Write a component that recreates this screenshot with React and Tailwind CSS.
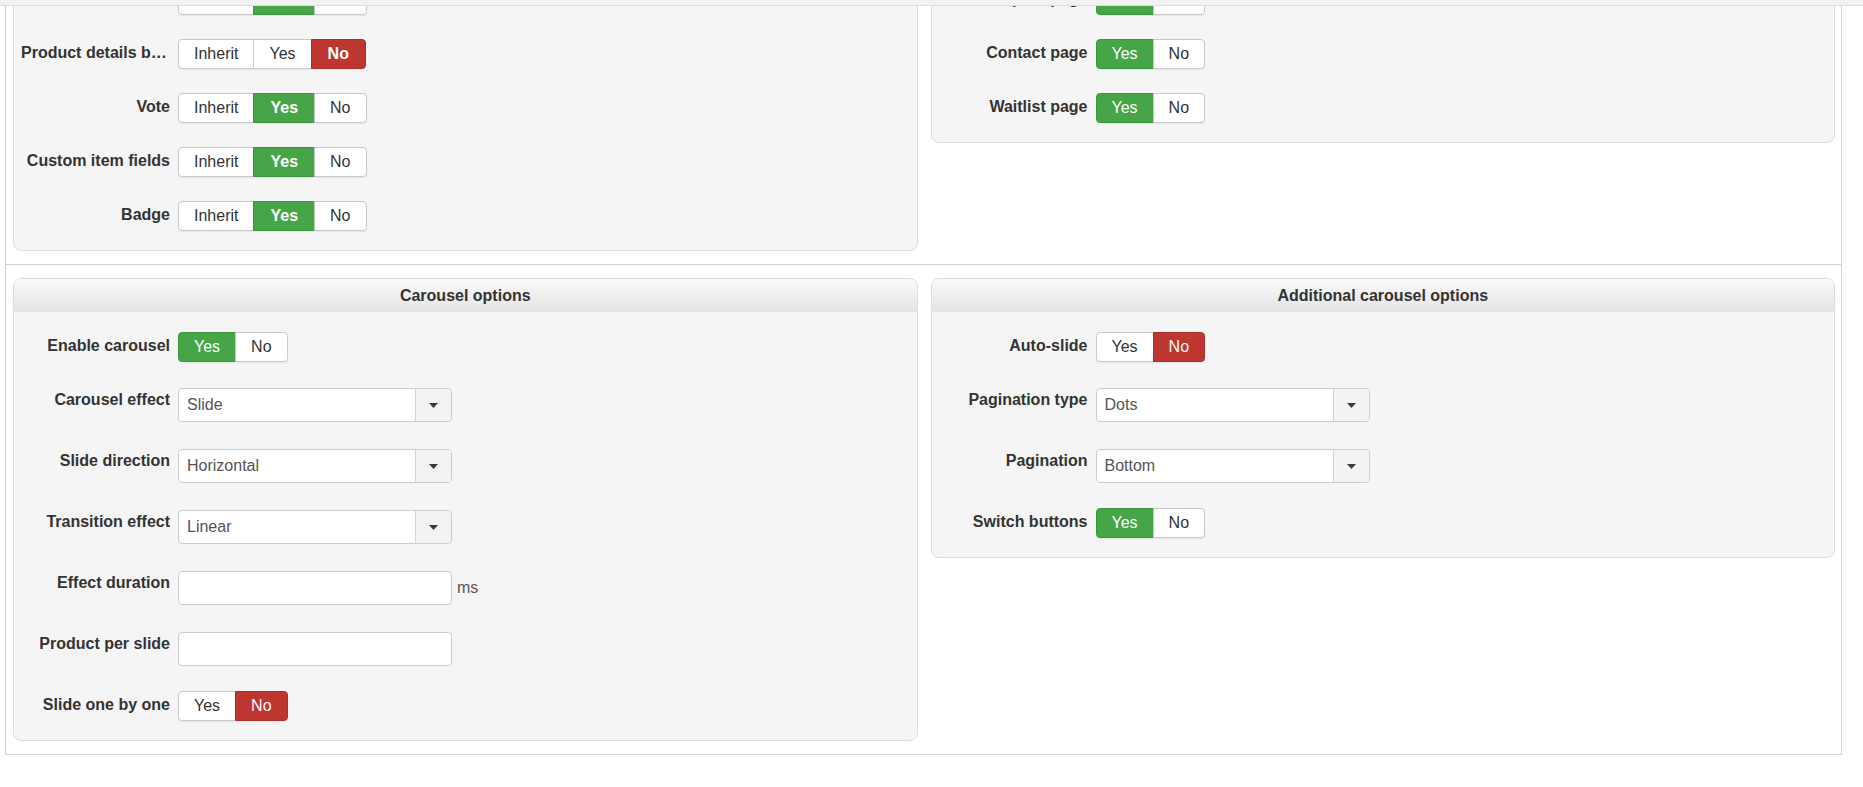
import React from "react";

const TONES = {
  Yes: "bg-[#46a546] border-[#3d963d] text-white",
  No: "bg-[#bd362f] border-[#a8302a] text-white",
};

// Joomla-style radio button group
const Toggle = ({ options = ["Yes", "No"], value, bold = false }) => (
  <div className="flex h-[30px] rounded-[4px] shadow-[0_1px_2px_rgba(0,0,0,0.07)]">
    {options.map((opt) => {
      const active = opt === value;
      return (
        <button
          key={opt}
          type="button"
          className={`-ml-px border py-[4px] text-[16px] leading-5 first:ml-0 first:rounded-l-[4px] last:rounded-r-[4px] ${
            active
              ? TONES[opt] || "bg-[#e6e6e6] border-[#c8c8c8] text-[#333]"
              : "bg-white border-[#c8c8c8] text-[#333]"
          } ${active && bold ? "px-[16px] font-bold" : "px-[15px]"}`}
        >
          {opt}
        </button>
      );
    })}
  </div>
);

const SelectBox = ({ value }) => (
  <div className="mt-[2px] mb-px flex h-[34px] w-[274px] rounded-[4px] border border-[#cccccc] bg-white">
    <span className="flex-1 pl-[8px] text-[16px] leading-8 text-[#555]">
      {value}
    </span>
    <span className="flex w-[36px] items-center justify-center rounded-r-[4px] border-l border-[#d6d6d6] bg-[#f3f3f3]">
      <svg width="9" height="5" viewBox="0 0 9 5">
        <polygon points="0,0 9,0 4.5,5" fill="#3a3a3a" />
      </svg>
    </span>
  </div>
);

const TextField = ({ suffix }) => (
  <div className="mt-[2px] mb-px flex items-center gap-[5px]">
    <input
      type="text"
      className="h-[34px] w-[274px] rounded-[4px] border border-[#cccccc] bg-white px-[8px] text-[16px] text-[#555] outline-none"
    />
    {suffix && <span className="text-[16px] text-[#555]">{suffix}</span>}
  </div>
);

const Row = ({ label, children }) => (
  <div className="flex items-start gap-[8px]">
    <label
      title={label}
      className="w-[149px] truncate pt-[4px] text-right text-[16px] font-bold leading-5 text-[#333]"
    >
      {label}
    </label>
    {children}
  </div>
);

const Panel = ({ title, children }) => (
  <div className="overflow-hidden rounded-lg border border-[#dcdcdc] bg-[#f5f5f5]">
    <div className="flex h-[33px] items-center justify-center bg-linear-to-b from-[#fafafa] to-[#e4e4e4] text-[16px] font-bold text-[#333]">
      {title}
    </div>
    <div className="flex flex-col gap-6 pt-[20px] pb-[19px] pl-[7px]">
      {children}
    </div>
  </div>
);

const withInherit = ["Inherit", "Yes", "No"];

export default function App() {
  return (
    <div className="bg-white font-['Liberation_Sans',Arial,sans-serif]">
      <div className="sticky top-0 z-10 h-[6px] border-b border-[#dedede] bg-[#f2f2f2]" />

      <div className="mt-[-89px] ml-[5px] w-[1837px] border border-[#d2d2d2]">
        {/* item display switches */}
        <div className="grid grid-cols-2 items-start gap-[13px] border-b border-[#d2d2d2] pt-[13px] pr-[6px] pb-[13px] pl-[7px]">
          <Panel title="Display options">
            <Row label="Price">
              <Toggle options={withInherit} value="Yes" bold />
            </Row>
            <Row label="Product details button">
              <Toggle options={withInherit} value="No" bold />
            </Row>
            <Row label="Vote">
              <Toggle options={withInherit} value="Yes" bold />
            </Row>
            <Row label="Custom item fields">
              <Toggle options={withInherit} value="Yes" bold />
            </Row>
            <Row label="Badge">
              <Toggle options={withInherit} value="Yes" bold />
            </Row>
          </Panel>

          <Panel title="Pages">
            <Row label="Compare page">
              <Toggle value="Yes" />
            </Row>
            <Row label="Contact page">
              <Toggle value="Yes" />
            </Row>
            <Row label="Waitlist page">
              <Toggle value="Yes" />
            </Row>
          </Panel>
        </div>

        {/* carousel settings */}
        <div className="grid grid-cols-2 items-start gap-[13px] pt-[13px] pr-[6px] pb-[13px] pl-[7px]">
          <Panel title="Carousel options">
            <Row label="Enable carousel">
              <Toggle value="Yes" />
            </Row>
            <Row label="Carousel effect">
              <SelectBox value="Slide" />
            </Row>
            <Row label="Slide direction">
              <SelectBox value="Horizontal" />
            </Row>
            <Row label="Transition effect">
              <SelectBox value="Linear" />
            </Row>
            <Row label="Effect duration">
              <TextField suffix="ms" />
            </Row>
            <Row label="Product per slide">
              <TextField />
            </Row>
            <Row label="Slide one by one">
              <Toggle value="No" />
            </Row>
          </Panel>

          <Panel title="Additional carousel options">
            <Row label="Auto-slide">
              <Toggle value="No" />
            </Row>
            <Row label="Pagination type">
              <SelectBox value="Dots" />
            </Row>
            <Row label="Pagination">
              <SelectBox value="Bottom" />
            </Row>
            <Row label="Switch buttons">
              <Toggle value="Yes" />
            </Row>
          </Panel>
        </div>
      </div>
    </div>
  );
}
